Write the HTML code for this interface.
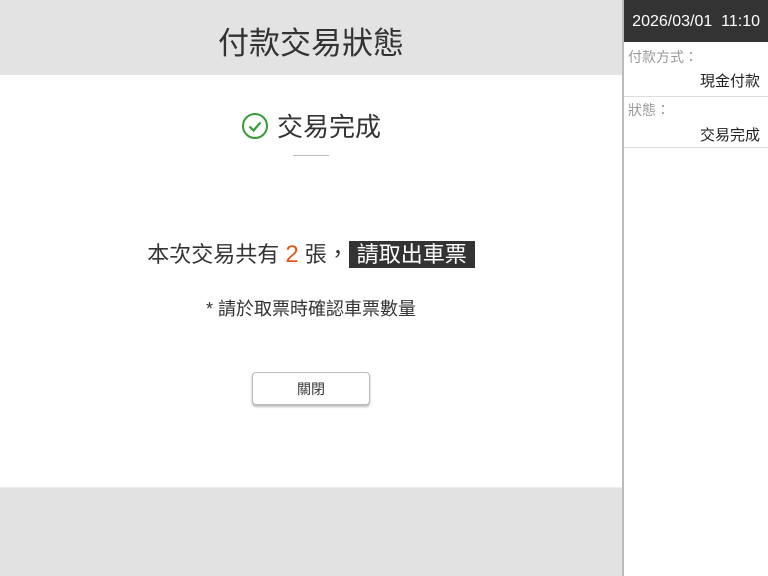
<!DOCTYPE html>
<html><head><meta charset="utf-8"><style>
*{margin:0;padding:0;box-sizing:border-box}
body{width:768px;height:576px;overflow:hidden;background:#fff;font-family:"Liberation Sans","Noto Sans CJK TC",sans-serif;position:relative;color:#333}
.hdr{position:absolute;left:0;top:0;width:622px;height:75px;background:#e3e3e3}
.hdr div{position:absolute;left:0;width:622px;top:24px;text-align:center;font-size:31px;line-height:40px;color:#333}
.bot{position:absolute;left:0;top:487px;width:622px;height:89px;background:#e2e2e2;border-top:1px solid #ececec}
.side{position:absolute;left:622px;top:0;width:146px;height:576px;border-left:2px solid #bbb;background:#fff}
.sh{height:42px;background:#333;color:#fff;font-size:16px;line-height:44px;text-align:right;padding-right:8px}
.lab{font-size:14px;color:#999;padding-left:4px;line-height:16px}
.val{font-size:15px;color:#222;text-align:right;padding-right:8px;line-height:18px}
.ln{border-bottom:1px solid #ddd}
.t{position:absolute;left:0;width:622px;text-align:center}
.box{background:#333;color:#fff;padding:0 8px;display:inline-block;line-height:27px}
.btn{position:absolute;left:252px;top:372px;width:118px;height:33px;border:1px solid #bbb;border-radius:4px;background:#fff;box-shadow:0 2px 2px #bbb;text-align:center;font-size:14px;line-height:32px;color:#333}
</style></head><body>
<div class="hdr"><div>付款交易狀態</div></div>
<div class="t" style="top:112px;font-size:26px;line-height:30px;color:#333"><svg width="28" height="28" viewBox="0 0 28 28" style="vertical-align:-4px;margin-right:8px;margin-left:0px"><circle cx="14" cy="14" r="12" fill="none" stroke="#3a9a3a" stroke-width="2"/><path d="M8.5 14.5l4 4 7-8" fill="none" stroke="#3a9a3a" stroke-width="2.2"/></svg>交易完成</div>
<div style="position:absolute;left:293px;top:155px;width:36px;height:1px;background:#bbb"></div>
<div class="t" style="top:241px;font-size:22px;line-height:28px;color:#333">本次交易共有 <span style="color:#e05a1a;font-size:24px">2</span> 張，<span class="box">請取出車票</span></div>
<div class="t" style="top:298px;font-size:18px;line-height:22px;color:#333">* 請於取票時確認車票數量</div>
<div class="btn">關閉</div>
<div class="bot"></div>
<div class="side">
<div class="sh">2026/03/01&nbsp; 11:10</div>
<div class="ln" style="height:55px;padding-top:7px"><div class="lab">付款方式：</div><div class="val" style="margin-top:8px">現金付款</div></div>
<div class="ln" style="height:51px;padding-top:5px"><div class="lab">狀態：</div><div class="val" style="margin-top:9px">交易完成</div></div>
</div>
</body></html>
